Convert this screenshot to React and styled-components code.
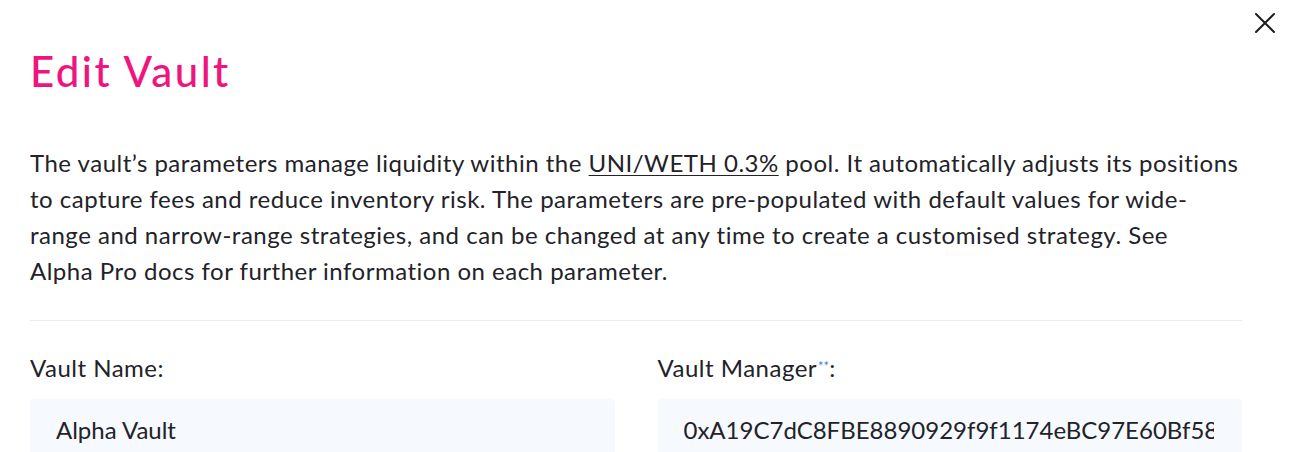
import styled, { createGlobalStyle } from "styled-components";

const Global = createGlobalStyle`
  body {
    margin: 0;
    background: #fff;
    font-family: "Lato", "Open Sans", sans-serif;
    color: #222228;
  }
`;

const Modal = styled.div`
  position: relative;
  padding: 46px 54px 0 30px;
`;

const CloseBtn = styled.button`
  position: absolute;
  top: 12px;
  right: 20px;
  width: 22px;
  height: 22px;
  padding: 0;
  border: none;
  background: none;
  cursor: pointer;
  color: #1e1e22;
`;

const Title = styled.h1`
  margin: 0;
  font-size: 42px;
  line-height: 50px;
  font-weight: 500;
  letter-spacing: 2.4px;
  color: #f0147e;
`;

const Intro = styled.p`
  margin: 49px 0 0;
  font-size: 24px;
  line-height: 36px;
  letter-spacing: 0.5px;
`;

const PoolLink = styled.span`
  text-decoration: underline;
  text-decoration-thickness: 1px;
  text-underline-offset: 3px;
`;

const Divider = styled.hr`
  margin: 31px 0 0;
  border: none;
  border-top: 1px solid #ececef;
`;

const Fields = styled.div`
  display: grid;
  grid-template-columns: 1fr 1fr;
  column-gap: 43px;
  margin-top: 29px;
`;

const Field = styled.div`
  display: flex;
  flex-direction: column;
  gap: 13px;
`;

const Label = styled.label`
  font-size: 24px;
  line-height: 36px;
  letter-spacing: 0.5px;
`;

const Stars = styled.sup`
  color: #3a7de8;
  font-size: 13px;
  vertical-align: 6px;
  line-height: 0;
  letter-spacing: 0;
  margin-left: 1px;
`;

const Input = styled.input`
  display: block;
  box-sizing: border-box;
  width: 100%;
  height: 62px;
  background: #f6f9fd;
  border: none;
  border-radius: 4px;
  padding: 12px 28px 14px 26px;
  font-family: inherit;
  font-size: 24px;
  line-height: 36px;
  letter-spacing: 0;
  color: #222228;
  outline: none;
`;

export default function App() {
  return (
    <>
      <Global />
      <Modal>
        <CloseBtn aria-label="Close">
          <svg width="22" height="22" viewBox="0 0 22 22" fill="none" stroke="currentColor" strokeWidth="2" strokeLinecap="round">
            <path d="M2 2 L20 20 M20 2 L2 20" />
          </svg>
        </CloseBtn>
        <Title>Edit Vault</Title>
        <Intro>
          The vault’s parameters manage liquidity within the <PoolLink>UNI/WETH 0.3%</PoolLink> pool. It
          automatically adjusts its positions to capture fees and reduce inventory risk. The parameters are
          pre-populated with default values for wide-range and narrow-range strategies, and can be changed at
          any time to create a customised strategy. See Alpha&nbsp;Pro docs for further information on each parameter.
        </Intro>
        <Divider />
        <Fields>
          <Field>
            <Label>Vault Name:</Label>
            <Input readOnly value="Alpha Vault" />
          </Field>
          <Field>
            <Label>
              Vault Manager<Stars>**</Stars>:
            </Label>
            <Input readOnly value="0xA19C7dC8FBE8890929f9f1174eBC97E60Bf58c4D" />
          </Field>
        </Fields>
      </Modal>
    </>
  );
}
